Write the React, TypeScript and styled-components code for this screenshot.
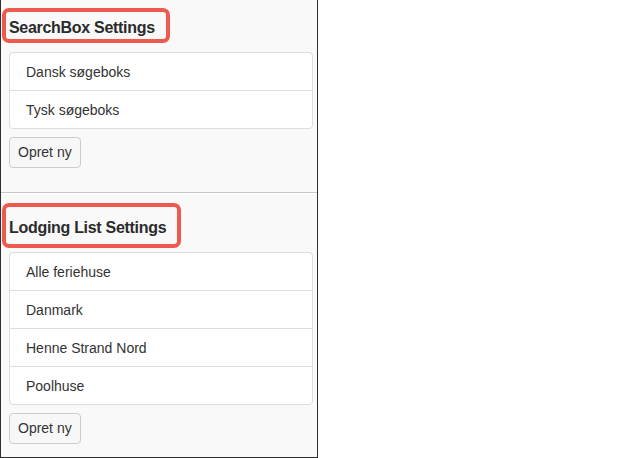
import React from "react";
import styled, { createGlobalStyle } from "styled-components";

const GlobalStyle = createGlobalStyle`
  html, body {
    margin: 0;
    padding: 0;
    background: #ffffff;
  }
  body {
    font-family: "Liberation Sans", Arial, Helvetica, sans-serif;
    color: #333333;
  }
`;

const Panel = styled.div`
  box-sizing: border-box;
  width: 318px;
  height: 458px;
  background: #f9f9f9;
  border: 1px solid #2e2e2e;
  border-top: none;
  display: flex;
  flex-direction: column;
`;

const Section = styled.section`
  display: flex;
  flex-direction: column;
  align-items: flex-start;
  padding: 0 4px 0 8px;
`;

// red annotation box round the heading
const Title = styled.h3<{ $tall?: boolean }>`
  margin: ${(p) => (p.$tall ? "9px" : "8px")} 0 0 -7px;
  padding: ${(p) => (p.$tall ? "11px 11px 7px 3px" : "6px 11px 2px 3px")};
  border: 4px solid #ef5a4e;
  border-radius: 7px;
  font-size: 16px;
  line-height: 19px;
  font-weight: 700;
  letter-spacing: -0.3px;
  color: #2b2b2b;
`;

const ListGroup = styled.ul<{ $gap: number }>`
  align-self: stretch;
  list-style: none;
  margin: ${(p) => p.$gap}px 0 0;
  padding: 0;
  background: #ffffff;
  border: 1px solid #dddddd;
  border-radius: 4px;
`;

const ListItem = styled.li`
  padding: 10px 16px 8px;
  font-size: 14px;
  line-height: 19px;
  color: #333333;
  & + & {
    border-top: 1px solid #dddddd;
  }
`;

const Button = styled.button`
  margin-top: 8px;
  padding: 5px 8px;
  font-family: inherit;
  font-size: 14px;
  line-height: 19px;
  color: #333333;
  background: #f7f7f7;
  border: 1px solid #cccccc;
  border-radius: 4px;
`;

const Divider = styled.hr`
  margin: 24px 0 0;
  height: 0;
  border: none;
  border-top: 1px solid #c6c6c6;
  border-bottom: 1px solid #ffffff;
`;

const searchBoxes = ["Dansk søgeboks", "Tysk søgeboks"];
const lodgingLists = ["Alle feriehuse", "Danmark", "Henne Strand Nord", "Poolhuse"];

const App = () => {
  return (
    <>
      <GlobalStyle />
      <Panel>
        <Section>
          <Title>SearchBox Settings</Title>
          <ListGroup $gap={9}>
            {searchBoxes.map((name) => (
              <ListItem key={name}>{name}</ListItem>
            ))}
          </ListGroup>
          <Button>Opret ny</Button>
        </Section>

        <Divider />

        <Section>
          <Title $tall>Lodging List Settings</Title>
          <ListGroup $gap={4}>
            {lodgingLists.map((name) => (
              <ListItem key={name}>{name}</ListItem>
            ))}
          </ListGroup>
          <Button>Opret ny</Button>
        </Section>
      </Panel>
    </>
  );
};

export default App;
